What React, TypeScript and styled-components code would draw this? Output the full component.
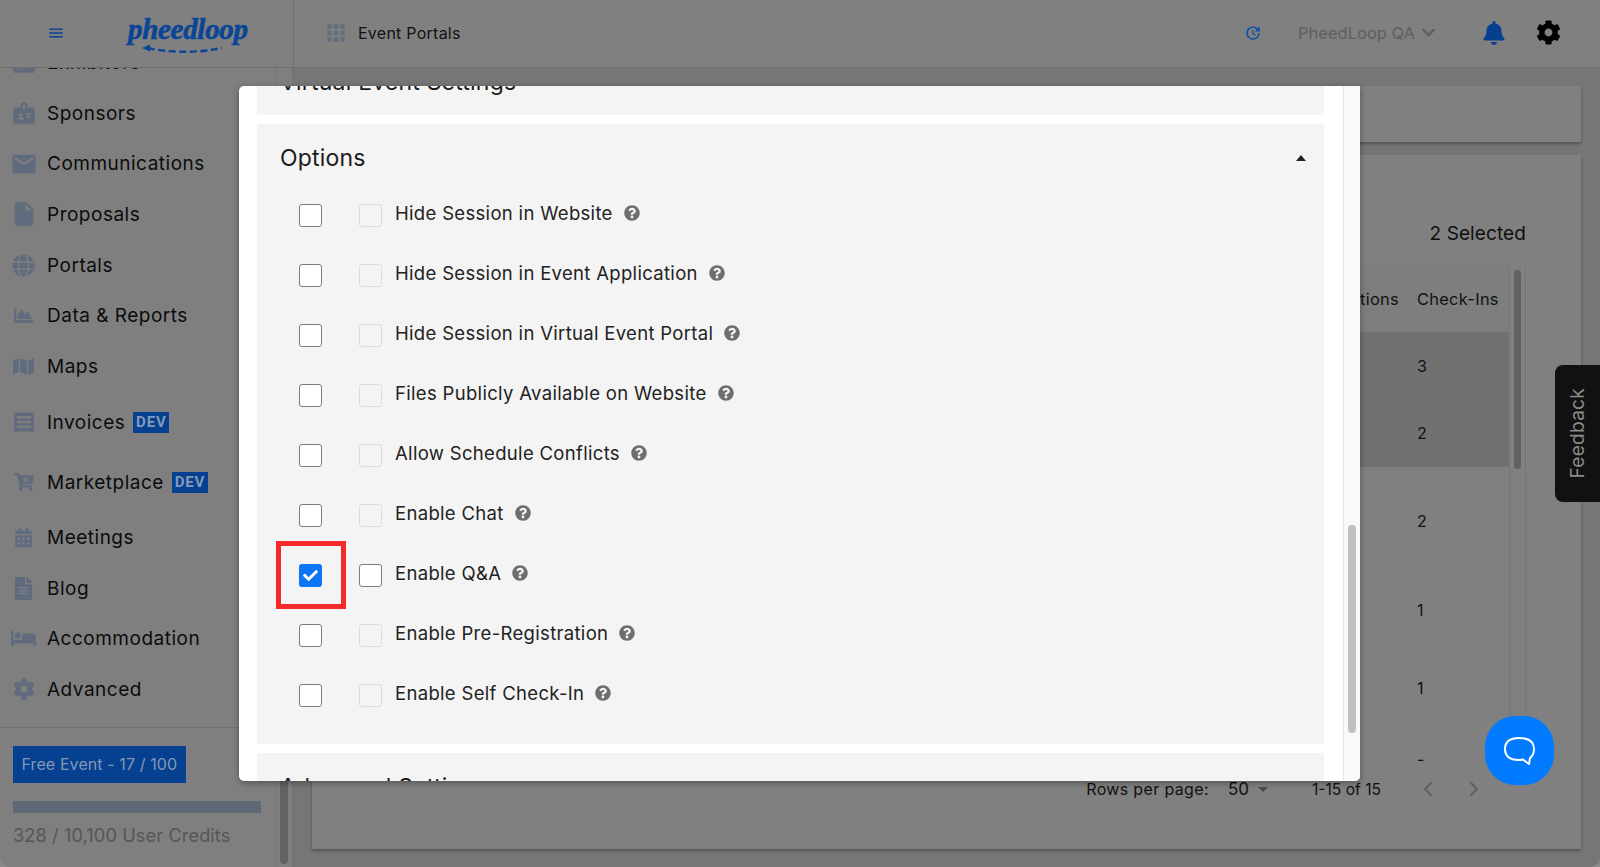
import React from "react";
import styled, { createGlobalStyle } from "styled-components";
import {
  FaGlobe, FaChartArea, FaMap, FaCartPlus, FaCalendarAlt,
  FaFileAlt, FaBed, FaCog, FaBell, FaQuestionCircle, FaCheck,
} from "react-icons/fa";
import { MdMenu, MdApps, MdUpdate, MdBadge, MdEmail, MdInsertDriveFile } from "react-icons/md";
import { FiChevronDown, FiChevronLeft, FiChevronRight } from "react-icons/fi";

const Global = createGlobalStyle`
  html, body { margin: 0; padding: 0; background: #8a8a8a; }
  * { box-sizing: border-box; }
  body { font-family: Inter, "Liberation Sans", sans-serif; }
`;

const Page = styled.div`
  position: relative;
  width: 1600px;
  height: 867px;
  overflow: hidden;
  display: flex;
  flex-direction: column;
  background: #7f7f7f;
  color: #0e0e0e;
  border-radius: 0 0 10px 10px;
`;

const Header = styled.header`
  position: relative;
  z-index: 1;
  flex: none;
  height: 68px;
  display: flex;
  align-items: center;
  background: #808080;
  border-bottom: 1px solid #6e6e6e;
`;
const Brand = styled.div`
  width: 294px;
  height: 100%;
  flex: none;
  display: flex;
  align-items: center;
  padding-left: 47px;
  border-right: 1px solid #727272;
  color: #0a4596;
  svg.menu { font-size: 18px; margin-bottom: 2px; }
`;
const Logo = styled.div`
  position: relative;
  margin-left: 63px;
  width: 118px;
  height: 46px;
  font-family: "Liberation Serif", serif;
  font-style: italic;
  font-weight: 700;
  font-size: 29px;
  letter-spacing: -0.3px;
  line-height: 36px;
  color: #0a4596;
  -webkit-text-stroke: 0.6px #0a4596;
  white-space: nowrap;
`;
const LogoArrow = styled.svg`
  position: absolute;
  left: 0;
  top: 0;
`;
const AppTitle = styled.div`
  display: flex;
  align-items: center;
  gap: 9px;
  padding: 0 0 2px 29px;
  font-size: 16px;
  letter-spacing: 0.25px;
  color: #111;
  svg { font-size: 26px; color: #626d80; }
`;
const HeaderRight = styled.div`
  margin-left: auto;
  display: flex;
  align-items: center;
  padding: 0 39px 2px 0;
`;
const Refresh = styled(MdUpdate)`
  font-size: 18px;
  color: #0a4fa8;
  margin-right: 36px;
`;
const Org = styled.div`
  display: flex;
  align-items: center;
  gap: 3px;
  font-size: 16.5px;
  letter-spacing: 0;
  color: #5f5f5f;
  margin-right: 43px;
  svg { font-size: 21px; stroke-width: 2.6; }
`;
const Bell = styled(FaBell)`
  font-size: 24px;
  color: #073f90;
  margin-right: 30px;
`;
const Gear = styled(FaCog)`
  font-size: 25px;
  color: #000;
`;

const Body = styled.div`
  flex: 1;
  min-height: 0;
  display: flex;
`;
const Side = styled.aside`
  width: 276px;
  flex: none;
  display: flex;
  flex-direction: column;
  border-right: 1px solid #747474;
`;
const NavList = styled.nav`
  flex: 1;
  min-height: 0;
  overflow: hidden;
`;
const NavScroll = styled.div`
  margin-top: -31px;
`;
const NavItem = styled.div<{ $tall?: number }>`
  height: ${(p) => p.$tall ?? 50.7}px;
  display: flex;
  align-items: center;
  font-size: 19px;
  letter-spacing: 0.5px;
  color: #0c0c0c;
  white-space: nowrap;
`;
const NavIcon = styled.span<{ $size?: number }>`
  width: 47px;
  flex: none;
  display: flex;
  justify-content: center;
  align-items: center;
  color: #606b7e;
  font-size: ${(p) => p.$size ?? 22}px;
`;
const Dev = styled.span`
  margin-left: 8px;
  width: 36px;
  height: 21px;
  line-height: 21px;
  text-align: center;
  font-family: "Liberation Sans Narrow", "Roboto", sans-serif;
  font-weight: 700;
  font-size: 15px;
  letter-spacing: 0.8px;
  background: #064090;
  color: #8399b8;
`;
const SideFooter = styled.div`
  flex: none;
  height: 140px;
  border-top: 1px solid #6f6f6f;
  padding: 18px 14px 0 13px;
`;
const FreeEvent = styled.div`
  display: inline-block;
  height: 37px;
  line-height: 37px;
  padding: 0 8.5px;
  background: #064090;
  color: #8298b6;
  font-size: 16px;
  letter-spacing: 0.1px;
`;
const Credit = styled.div`
  margin-top: 18px;
  height: 12px;
  background: #5e6876;
`;
const CreditText = styled.div`
  margin-top: 11px;
  font-size: 18.2px;
  letter-spacing: 0.1px;
  color: #565656;
`;
const Rail = styled.div`
  width: 17px;
  flex: none;
  padding: 100px 4px 3px;
  display: flex;
  align-items: flex-end;
  border-right: 1px solid #727272;
`;
const RailThumb = styled.div`
  width: 9px;
  height: 100%;
  border-radius: 5px;
  background: #626262;
`;

const Main = styled.main`
  flex: 1;
  min-width: 0;
  background: #767676;
  padding: 18px 19px 18px 19px;
  display: flex;
  flex-direction: column;
  gap: 13px;
`;
const TopCard = styled.div`
  flex: none;
  height: 56px;
  background: #808080;
  box-shadow: 0 2px 3px rgba(0, 0, 0, 0.3);
`;
const TableCard = styled.div`
  flex: 1;
  min-height: 0;
  background: #808080;
  box-shadow: 0 2px 3px rgba(0, 0, 0, 0.3);
  padding: 67px 55px 0 0;
  display: flex;
  flex-direction: column;
  align-items: flex-end;
`;
const Selected = styled.div`
  font-size: 19px;
  line-height: 24px;
  color: #0f0f0f;
  letter-spacing: 0.1px;
  height: 44px;
`;
const TableWrap = styled.div`
  width: 100%;
  height: 506px;
  display: flex;
  overflow: hidden;
`;
const Table = styled.div`
  flex: 1;
`;
const HeadRow = styled.div`
  height: 67px;
  display: flex;
  align-items: center;
  justify-content: flex-end;
  font-size: 16.4px;
  letter-spacing: 0.3px;
  color: #111;
  background: #7e7e7e;
  border-bottom: 1px solid #757575;
`;
const HeadCell = styled.div<{ $w: number; $pad?: number }>`
  width: ${(p) => p.$w}px;
  flex: none;
  padding-right: ${(p) => p.$pad ?? 0}px;
  text-align: ${(p) => (p.$pad ? "right" : "left")};
`;
const Row = styled.div<{ $h: number; $on?: boolean }>`
  height: ${(p) => p.$h}px;
  display: flex;
  align-items: center;
  justify-content: flex-end;
  padding-bottom: ${(p) => (p.$on ? 2 : 0)}px;
  background: ${(p) => (p.$on ? "#717171" : "transparent")};
  font-size: 16px;
  color: #111;
`;
const Cell = styled.div`
  width: 92px;
  flex: none;
`;
const TableRail = styled.div`
  width: 17px;
  flex: none;
  padding: 4px 4px;
  border-left: 1px solid #777;
  border-right: 1px solid #777;
`;
const TableThumb = styled.div`
  height: 199px;
  border-radius: 5px;
  background: #616161;
`;
const Pager = styled.div`
  align-self: stretch;
  display: flex;
  align-items: center;
  justify-content: flex-end;
  height: 34px;
  font-size: 16px;
  color: #111;
`;
const PagerLabel = styled.span`
  margin-right: 19px;
  letter-spacing: 0.35px;
`;
const PagerSelect = styled.span`
  font-size: 17px;
  margin-right: 44px;
  display: flex;
  align-items: center;
  gap: 9px;
`;
const PagerCaret = styled.span`
  width: 0;
  height: 0;
  border-left: 5px solid transparent;
  border-right: 5px solid transparent;
  border-top: 5px solid #4c4c4c;
`;
const PagerRange = styled.span`
  font-size: 15.6px;
  letter-spacing: 0;
  margin-right: 35px;
`;
const PagerNav = styled.span`
  display: flex;
  gap: 22px;
  color: #5f5f5f;
  font-size: 24px;
  margin-right: 40px;
  svg { display: block; }
`;

const Modal = styled.div`
  position: absolute;
  z-index: 2;
  left: 239px;
  top: 86px;
  width: 1121px;
  height: 695px;
  display: flex;
  background: #fff;
  border-radius: 5px 0 5px 5px;
  overflow: hidden;
  box-shadow: 0 2px 6px rgba(0, 0, 0, 0.35);
`;
const ModalScroll = styled.div`
  flex: 1;
  min-width: 0;
  padding: 0 19px 0 18px;
  overflow: hidden;
`;
const ModalContent = styled.div`
  margin-top: -36px;
  display: flex;
  flex-direction: column;
  gap: 9px;
`;
const Panel = styled.section`
  background: #f4f4f4;
  flex: none;
  display: flow-root;
`;
const PanelHead = styled.div<{ $lift?: number }>`
  height: 62px;
  margin-top: 3px;
  display: flex;
  align-items: center;
  justify-content: space-between;
  padding: 0 18px ${(p) => p.$lift ?? 0}px 23px;
  font-size: 23px;
  letter-spacing: 0.2px;
  color: #1c1c1c;
`;
const PanelBody = styled.div`
  padding: 0 0 19px 42px;
  margin-top: -4px;
`;
const Caret = styled.span`
  width: 0;
  height: 0;
  border-left: 5.5px solid transparent;
  border-right: 5.5px solid transparent;
  border-bottom: 6px solid #222;
`;
const OptionRow = styled.div`
  height: 60px;
  display: flex;
  align-items: center;
`;
const CheckCell = styled.span`
  position: relative;
  display: flex;
  margin-right: 37px;
`;
const Check = styled.span<{ $checked?: boolean; $muted?: boolean }>`
  width: 23px;
  height: 23px;
  flex: none;
  display: flex;
  align-items: center;
  justify-content: center;
  border-radius: 3px;
  border: ${(p) =>
    p.$checked ? "none" : p.$muted ? "1.5px solid #dcdcdc" : "1.5px solid #7d7d7d"};
  background: ${(p) => (p.$checked ? "#0b76f5" : p.$muted ? "#f4f4f4" : "#fff")};
  color: #fff;
  font-size: 15px;
`;
const Callout = styled.span`
  position: absolute;
  left: -23px;
  top: -23px;
  width: 70px;
  height: 68px;
  border: 5px solid #f52b2b;
`;
const OptionLabel = styled.span`
  margin-left: 13px;
  margin-bottom: 4px;
  font-size: 18.5px;
  letter-spacing: 0.32px;
  color: #222;
  display: flex;
  align-items: center;
  gap: 11px;
  svg { color: #6e6e6e; font-size: 16px; }
`;
const ModalRail = styled.div`
  width: 17px;
  flex: none;
  background: #f9f9f9;
  border-left: 1px solid #e8e8e8;
  padding: 439px 4px 0 4px;
`;
const ModalThumb = styled.div`
  height: 208px;
  border-radius: 5px;
  background: #c1c1c1;
`;

const Feedback = styled.div`
  position: absolute;
  z-index: 1;
  right: 0;
  top: 365px;
  width: 45px;
  height: 137px;
  border-radius: 8px 0 0 8px;
  background: #111;
  color: #8a8a8a;
  font-size: 19px;
  letter-spacing: 0.3px;
  display: flex;
  align-items: center;
  justify-content: center;
  span { writing-mode: vertical-rl; transform: rotate(180deg); }
`;
const Chat = styled.div`
  position: absolute;
  z-index: 3;
  left: 1485px;
  top: 716px;
  width: 69px;
  height: 69px;
  border-radius: 44%;
  background: #007bff;
  display: flex;
  align-items: center;
  justify-content: center;
`;

const InvoiceIcon = () => (
  <svg width="22" height="22" viewBox="0 0 22 22" fill="currentColor">
    <path fillRule="evenodd" d="M1 1l2 1 2-1 2 1 2-1 2 1 2-1 2 1 2-1 2 1 2-1v20l-2-1-2 1-2-1-2 1-2-1-2 1-2-1-2 1-2-1-2 1zM4 5v2.500h14V5zM4 9.800v2.500h14V9.800zM4 14.600v2.500h14v-2.500z" />
  </svg>
);

const nav: { label: string; icon: React.ReactNode; size?: number; dev?: boolean; tall?: number }[] = [
  { label: "Exhibitors", icon: <MdBadge />, size: 26 },
  { label: "Sponsors", icon: <MdBadge />, size: 26 },
  { label: "Communications", icon: <MdEmail />, size: 28 },
  { label: "Proposals", icon: <MdInsertDriveFile />, size: 28 },
  { label: "Portals", icon: <FaGlobe />, size: 23 },
  { label: "Data & Reports", icon: <FaChartArea />, size: 19 },
  { label: "Maps", icon: <FaMap />, size: 21 },
  { label: "Invoices", icon: <InvoiceIcon />, dev: true, tall: 60.6 },
  { label: "Marketplace", icon: <FaCartPlus />, size: 20, dev: true, tall: 59.6 },
  { label: "Meetings", icon: <FaCalendarAlt />, size: 19 },
  { label: "Blog", icon: <FaFileAlt />, size: 23 },
  { label: "Accommodation", icon: <FaBed />, size: 25 },
  { label: "Advanced", icon: <FaCog />, size: 22 },
];

const options = [
  "Hide Session in Website",
  "Hide Session in Event Application",
  "Hide Session in Virtual Event Portal",
  "Files Publicly Available on Website",
  "Allow Schedule Conflicts",
  "Enable Chat",
  "Enable Q&A",
  "Enable Pre-Registration",
  "Enable Self Check-In",
];

const rows: { v: string; h: number; on?: boolean }[] = [
  { v: "3", h: 67, on: true },
  { v: "2", h: 67, on: true },
  { v: "2", h: 108 },
  { v: "1", h: 70 },
  { v: "1", h: 86 },
  { v: "-", h: 56 },
];

export default function App() {
  return (
    <Page>
      <Global />
      <Header>
        <Brand>
          <MdMenu className="menu" />
          <Logo>
            pheedloop
            <LogoArrow width="118" height="46" viewBox="0 0 118 46" fill="none" stroke="#0a4596">
              <path d="M20 37 C42 42 72 42 94 37" strokeWidth="2.4" strokeDasharray="7 3.5" />
              <path d="M14 37l8-3.500v7z" fill="#0a4596" stroke="none" />
            </LogoArrow>
          </Logo>
        </Brand>
        <AppTitle>
          <MdApps />
          Event Portals
        </AppTitle>
        <HeaderRight>
          <Refresh />
          <Org>
            PheedLoop QA
            <FiChevronDown />
          </Org>
          <Bell />
          <Gear />
        </HeaderRight>
      </Header>
      <Body>
        <Side>
          <NavList>
            <NavScroll>
              {nav.map((n) => (
                <NavItem key={n.label} $tall={n.tall}>
                  <NavIcon $size={n.size}>{n.icon}</NavIcon>
                  {n.label}
                  {n.dev && <Dev>DEV</Dev>}
                </NavItem>
              ))}
            </NavScroll>
          </NavList>
          <SideFooter>
            <FreeEvent>Free Event - 17 / 100</FreeEvent>
            <Credit />
            <CreditText>328 / 10,100 User Credits</CreditText>
          </SideFooter>
        </Side>
        <Rail>
          <RailThumb />
        </Rail>
        <Main>
          <TopCard />
          <TableCard>
            <Selected>2 Selected</Selected>
            <TableWrap>
              <Table>
                <HeadRow>
                  <HeadCell $w={130} $pad={18}>Registrations</HeadCell>
                  <HeadCell $w={92}>Check-Ins</HeadCell>
                </HeadRow>
                {rows.map((r, i) => (
                  <Row key={i} $h={r.h} $on={r.on}>
                    <Cell>{r.v}</Cell>
                  </Row>
                ))}
              </Table>
              <TableRail>
                <TableThumb />
              </TableRail>
            </TableWrap>
            <Pager>
              <PagerLabel>Rows per page:</PagerLabel>
              <PagerSelect>
                50
                <PagerCaret />
              </PagerSelect>
              <PagerRange>1-15 of 15</PagerRange>
              <PagerNav>
                <FiChevronLeft />
                <FiChevronRight />
              </PagerNav>
            </Pager>
          </TableCard>
        </Main>
      </Body>

      <Modal>
        <ModalScroll>
          <ModalContent>
            <Panel>
              <PanelHead $lift={4}>Virtual Event Settings</PanelHead>
            </Panel>
            <Panel>
              <PanelHead>
                Options
                <Caret />
              </PanelHead>
              <PanelBody>
                {options.map((o) => {
                  const active = o === "Enable Q&A";
                  return (
                    <OptionRow key={o}>
                      <CheckCell>
                        <Check $checked={active}>{active && <FaCheck />}</Check>
                        {active && <Callout />}
                      </CheckCell>
                      <Check $muted={!active} />
                      <OptionLabel>
                        {o}
                        <FaQuestionCircle />
                      </OptionLabel>
                    </OptionRow>
                  );
                })}
              </PanelBody>
            </Panel>
            <Panel>
              <PanelHead>Advanced Settings</PanelHead>
            </Panel>
          </ModalContent>
        </ModalScroll>
        <ModalRail>
          <ModalThumb />
        </ModalRail>
      </Modal>

      <Feedback>
        <span>Feedback</span>
      </Feedback>
      <Chat>
        <svg width="34" height="32" viewBox="0 0 34 32" fill="none" stroke="#fff" strokeWidth="2" strokeLinejoin="round">
          <path d="M16 3c9 0 15 2.500 15 11 0 4-1.500 7-4 9l-1 6-6-4.500c-1.500.3-3 .5-4 .5C7 25 2 21.500 2 14 2 6 7 3 16 3z" />
        </svg>
      </Chat>
    </Page>
  );
}
